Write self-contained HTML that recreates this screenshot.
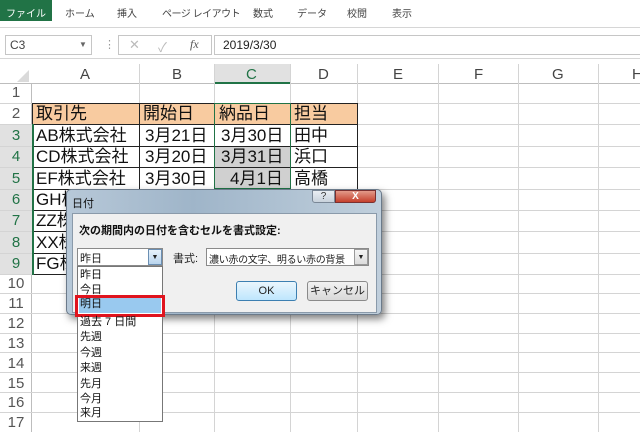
<!DOCTYPE html>
<html><head><meta charset="utf-8"><style>
*{margin:0;padding:0;box-sizing:border-box}
body{width:640px;height:432px;overflow:hidden;background:#fff;position:relative;font-family:"Liberation Sans","Noto Sans CJK JP",sans-serif;color:#222}
.a{position:absolute}
.t{font-size:10px;color:#444;white-space:nowrap}
.vl{position:absolute;width:1px;background:#d4d4d4}
.hl{position:absolute;height:1px;background:#d4d4d4}
.rn{position:absolute;left:0;width:32px;text-align:center;font-size:15px;color:#555}
.cell{position:absolute;font-size:17px;color:#111;white-space:nowrap;line-height:21px}
.li{position:absolute;left:80px;font-size:11px;color:#111;line-height:15px}
</style></head><body>
<!-- ribbon -->
<div class="a" style="left:0;top:0;width:52px;height:21px;background:#217346"></div>
<div class="a t" style="left:6px;top:5px;color:#fff">ファイル</div>
<div class="a t" style="left:65px;top:5px">ホーム</div>
<div class="a t" style="left:117px;top:5px">挿入</div>
<div class="a t" style="left:162px;top:5px;letter-spacing:-0.5px">ページ レイアウト</div>
<div class="a t" style="left:253px;top:5px">数式</div>
<div class="a t" style="left:297px;top:5px">データ</div>
<div class="a t" style="left:347px;top:5px">校閲</div>
<div class="a t" style="left:392px;top:5px">表示</div>
<div class="a" style="left:0;top:27px;width:640px;height:32px;background:#fff;border-top:1px solid #d6d6d6;border-bottom:1px solid #d6d6d6"></div>
<div class="a" style="left:5px;top:35px;width:87px;height:20px;border:1px solid #c6c6c6"></div>
<div class="a t" style="left:10px;top:38px;font-size:12px">C3</div>
<div class="a" style="left:79px;top:40px;font-size:8px;color:#666">▼</div>
<div class="a" style="left:104px;top:38px;font-size:11px;color:#999">⋮</div>
<div class="a" style="left:118px;top:35px;width:94px;height:20px;border:1px solid #c6c6c6"></div>
<div class="a" style="left:129px;top:37px;font-size:13px;color:#bbb">✕</div>
<div class="a" style="left:158px;top:37px;font-size:13px;color:#bbb">✓</div>
<div class="a" style="left:190px;top:37px;font-size:12px;font-style:italic;font-family:'Liberation Serif',serif;color:#555">fx</div>
<div class="a" style="left:214px;top:35px;width:426px;height:20px;border:1px solid #c6c6c6;border-right:none"></div>
<div class="a t" style="left:223px;top:38px;font-size:12px;color:#222">2019/3/30</div>
<!-- headers -->
<div class="a" style="left:0;top:64px;width:640px;height:20px;background:#fff;border-bottom:1px solid #bdbdbd"></div>
<div class="a" style="left:214px;top:64px;width:77px;height:20px;background:#e1e1e1;border-bottom:2px solid #217346"></div>
<div class="a" style="left:17px;top:70px;width:0;height:0;border-left:12px solid transparent;border-bottom:12px solid #dadada"></div>
<div class="a" style="left:0;top:84px;width:32px;height:348px;border-right:1px solid #bdbdbd"></div>
<div class="a" style="left:0;top:124px;width:32px;height:150px;background:#e1e1e1"></div>
<div class="a" style="left:80px;top:66px;font-size:15px;color:#444">A</div>
<div class="a" style="left:172px;top:66px;font-size:15px;color:#444">B</div>
<div class="a" style="left:246px;top:66px;font-size:15px;color:#217346">C</div>
<div class="a" style="left:318px;top:66px;font-size:15px;color:#444">D</div>
<div class="a" style="left:393px;top:66px;font-size:15px;color:#444">E</div>
<div class="a" style="left:474px;top:66px;font-size:15px;color:#444">F</div>
<div class="a" style="left:552px;top:66px;font-size:15px;color:#444">G</div>
<div class="a" style="left:632px;top:66px;font-size:15px;color:#444">H</div>
<!-- grid -->
<div class="vl" style="left:139px;top:64px;height:368px"></div>
<div class="vl" style="left:214px;top:64px;height:368px"></div>
<div class="vl" style="left:290px;top:64px;height:368px"></div>
<div class="vl" style="left:357px;top:64px;height:368px"></div>
<div class="vl" style="left:438px;top:64px;height:368px"></div>
<div class="vl" style="left:518px;top:64px;height:368px"></div>
<div class="vl" style="left:598px;top:64px;height:368px"></div>
<div class="hl" style="left:0;top:103px;width:640px"></div>
<div class="hl" style="left:0;top:124px;width:640px"></div>
<div class="hl" style="left:0;top:146px;width:640px"></div>
<div class="hl" style="left:0;top:167px;width:640px"></div>
<div class="hl" style="left:0;top:189px;width:640px"></div>
<div class="hl" style="left:0;top:210px;width:640px"></div>
<div class="hl" style="left:0;top:231px;width:640px"></div>
<div class="hl" style="left:0;top:253px;width:640px"></div>
<div class="hl" style="left:0;top:274px;width:640px"></div>
<div class="hl" style="left:0;top:293px;width:640px"></div>
<div class="hl" style="left:0;top:313px;width:640px"></div>
<div class="hl" style="left:0;top:333px;width:640px"></div>
<div class="hl" style="left:0;top:352px;width:640px"></div>
<div class="hl" style="left:0;top:372px;width:640px"></div>
<div class="hl" style="left:0;top:392px;width:640px"></div>
<div class="hl" style="left:0;top:412px;width:640px"></div>
<!-- row numbers -->
<div class="rn" style="top:84px">1</div>
<div class="rn" style="top:105px">2</div>
<div class="rn" style="top:127px;color:#217346">3</div>
<div class="rn" style="top:148px;color:#217346">4</div>
<div class="rn" style="top:170px;color:#217346">5</div>
<div class="rn" style="top:191px;color:#217346">6</div>
<div class="rn" style="top:212px;color:#217346">7</div>
<div class="rn" style="top:234px;color:#217346">8</div>
<div class="rn" style="top:255px;color:#217346">9</div>
<div class="rn" style="top:275px">10</div>
<div class="rn" style="top:295px">11</div>
<div class="rn" style="top:315px">12</div>
<div class="rn" style="top:335px">13</div>
<div class="rn" style="top:355px">14</div>
<div class="rn" style="top:375px">15</div>
<div class="rn" style="top:394px">16</div>
<div class="rn" style="top:414px">17</div>
<!-- table -->
<div class="a" style="left:32px;top:103px;width:325px;height:21px;background:#f8cba0"></div>
<div class="a" style="left:214px;top:146px;width:76px;height:43px;background:#d0d0d0"></div>
<div class="a" style="left:32px;top:103px;width:326px;height:172px;border:1px solid #222"></div>
<div class="a" style="left:139px;top:103px;width:1px;height:172px;background:#222"></div>
<div class="a" style="left:214px;top:103px;width:1px;height:172px;background:#222"></div>
<div class="a" style="left:290px;top:103px;width:1px;height:172px;background:#222"></div>
<div class="a" style="left:32px;top:124px;width:326px;height:1px;background:#222"></div>
<div class="a" style="left:32px;top:146px;width:326px;height:1px;background:#222"></div>
<div class="a" style="left:32px;top:167px;width:326px;height:1px;background:#222"></div>
<div class="a" style="left:32px;top:189px;width:326px;height:1px;background:#222"></div>
<div class="a" style="left:32px;top:210px;width:326px;height:1px;background:#222"></div>
<div class="a" style="left:32px;top:231px;width:326px;height:1px;background:#222"></div>
<div class="a" style="left:32px;top:253px;width:326px;height:1px;background:#222"></div>
<div class="a" style="left:214px;top:103px;width:77px;height:86px;border:1px solid #217346"></div>
<div class="a" style="left:32px;top:124px;width:2px;height:151px;background:#217346"></div>
<div class="cell" style="left:36px;top:103px">取引先</div>
<div class="cell" style="left:143px;top:103px">開始日</div>
<div class="cell" style="left:219px;top:103px">納品日</div>
<div class="cell" style="left:294px;top:103px">担当</div>
<div class="cell" style="left:36px;top:125px">AB株式会社</div>
<div class="cell" style="left:36px;top:146px">CD株式会社</div>
<div class="cell" style="left:36px;top:168px">EF株式会社</div>
<div class="cell" style="left:36px;top:189px">GH株式会社</div>
<div class="cell" style="left:36px;top:210px">ZZ株式会社</div>
<div class="cell" style="left:36px;top:232px">XX株式会社</div>
<div class="cell" style="left:36px;top:253px">FG株式会社</div>
<div class="cell" style="left:145px;top:125px">3月21日</div>
<div class="cell" style="left:145px;top:146px">3月20日</div>
<div class="cell" style="left:145px;top:168px">3月30日</div>
<div class="cell" style="left:221px;top:125px">3月30日</div>
<div class="cell" style="left:221px;top:146px">3月31日</div>
<div class="cell" style="left:230px;top:168px">4月1日</div>
<div class="cell" style="left:294px;top:125px">田中</div>
<div class="cell" style="left:294px;top:146px">浜口</div>
<div class="cell" style="left:294px;top:168px">高橋</div>
<!-- dialog -->
<div class="a" style="left:66px;top:189px;width:316px;height:126px;border:1px solid #6b7a8a;border-radius:5px;background:linear-gradient(90deg,#b7c8d8,#9fb5c9 40%,#c0cfdc);box-shadow:3px 4px 8px rgba(0,0,0,.5)"></div>
<div class="a" style="left:72px;top:195px;font-size:11px;color:#111">日付</div>
<div class="a" style="left:312px;top:190px;width:23px;height:13px;border:1px solid #7a8796;border-radius:0 0 0 3px;background:linear-gradient(#e9eef3,#c8d2dc);font-size:10px;text-align:center;line-height:12px;color:#333">?</div>
<div class="a" style="left:335px;top:190px;width:41px;height:13px;border:1px solid #7a3030;border-radius:0 0 3px 0;background:linear-gradient(#e39a8a,#c5402c);font-size:10px;text-align:center;line-height:12px;color:#fff;font-weight:bold">X</div>
<div class="a" style="left:72px;top:213px;width:305px;height:100px;background:#f0f0f0;border:1px solid #8a9aaa"></div>
<div class="a" style="left:79px;top:222px;font-size:11px;font-weight:bold;color:#111">次の期間内の日付を含むセルを書式設定:</div>
<div class="a" style="left:77px;top:248px;width:86px;height:18px;background:#fff;border:1px solid #8a8a8a"></div>
<div class="a" style="left:80px;top:250px;font-size:11px">昨日</div>
<div class="a" style="left:148px;top:249px;width:14px;height:16px;background:linear-gradient(#e8f2fb,#b9d5ee);border:1px solid #6b8fb3;font-size:7px;text-align:center;line-height:15px">▼</div>
<div class="a" style="left:173px;top:250px;font-size:11px">書式:</div>
<div class="a" style="left:206px;top:248px;width:163px;height:18px;background:#fff;border:1px solid #8a8a8a"></div>
<div class="a" style="left:209px;top:251px;font-size:10px;letter-spacing:-0.3px;white-space:nowrap">濃い赤の文字、明るい赤の背景</div>
<div class="a" style="left:354px;top:249px;width:14px;height:16px;background:linear-gradient(#f5f5f5,#dcdcdc);border:1px solid #999;font-size:7px;text-align:center;line-height:15px">▼</div>
<div class="a" style="left:236px;top:281px;width:61px;height:20px;border:1px solid #3c7fb1;border-radius:3px;background:linear-gradient(#eaf6fd,#bee6fd);font-size:11px;text-align:center;line-height:18px">OK</div>
<div class="a" style="left:307px;top:281px;width:61px;height:20px;border:1px solid #8a8a8a;border-radius:3px;background:linear-gradient(#f2f2f2,#d9d9d9);font-size:11px;text-align:center;line-height:18px">キャンセル</div>
<!-- dropdown list -->
<div class="a" style="left:77px;top:266px;width:86px;height:156px;background:#fff;border:1px solid #777"></div>
<div class="li" style="top:268px">昨日</div>
<div class="li" style="top:283px">今日</div>
<div class="a" style="left:79px;top:296px;width:82px;height:17px;background:#99c9ef"></div>
<div class="a" style="left:75px;top:295px;width:90px;height:22px;border:3px solid #e0141e"></div>
<div class="li" style="top:297px">明日</div>
<div class="li" style="top:315px">過去 7 日間</div>
<div class="li" style="top:330px">先週</div>
<div class="li" style="top:346px">今週</div>
<div class="li" style="top:361px">来週</div>
<div class="li" style="top:377px">先月</div>
<div class="li" style="top:392px">今月</div>
<div class="li" style="top:406px">来月</div>
</body></html>
